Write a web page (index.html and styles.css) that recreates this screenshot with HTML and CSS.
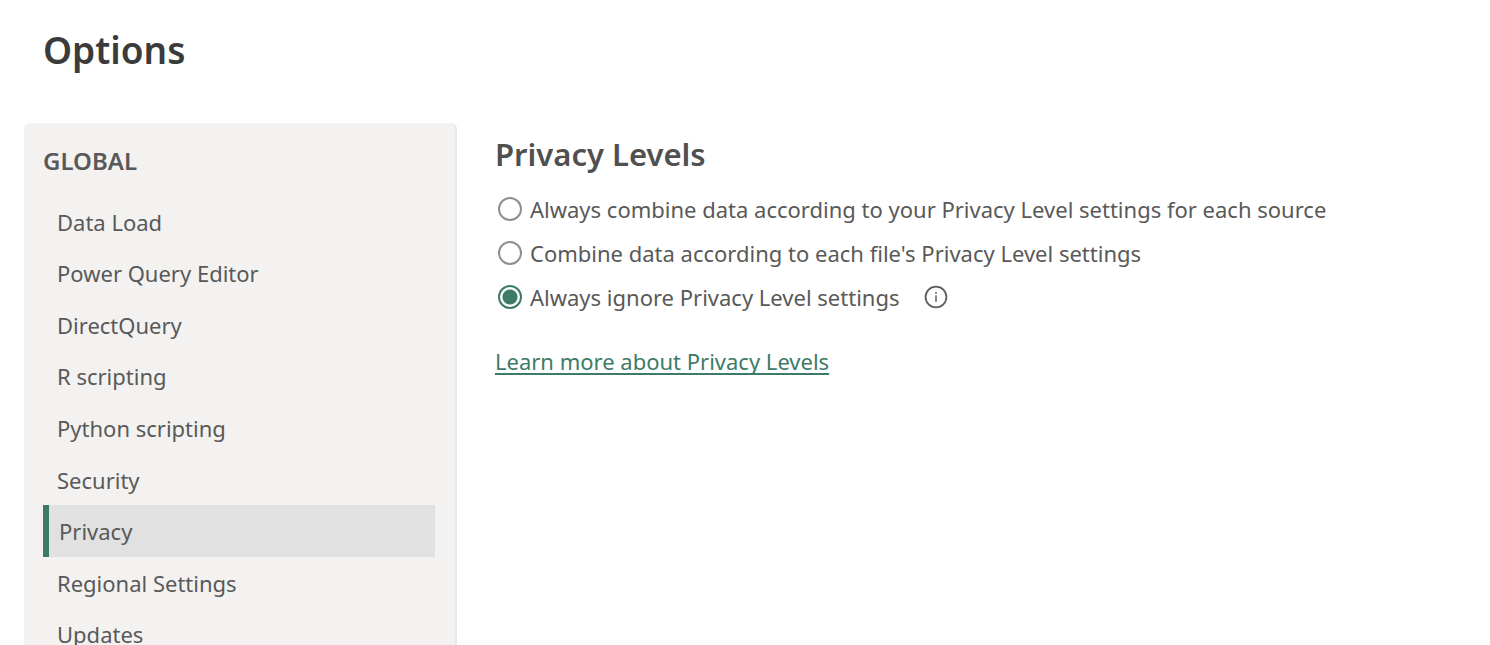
FILE: index.html
```html
<!DOCTYPE html>
<html lang="en">
<head>
  <meta charset="UTF-8" />
  <meta name="viewport" content="width=device-width, initial-scale=1.0" />
  <title>Options</title>
  <link rel="stylesheet" href="styles.css">
</head>
<body>
  <h1 class="title">Options</h1>

  <div class="layout">
    <nav class="sidebar">
      <h2 class="group-title">GLOBAL</h2>
      <ul class="menu">
        <li><a href="#data-load">Data Load</a></li>
        <li><a href="#power-query">Power Query Editor</a></li>
        <li><a href="#direct-query">DirectQuery</a></li>
        <li><a href="#r-scripting">R scripting</a></li>
        <li><a href="#python-scripting">Python scripting</a></li>
        <li><a href="#security">Security</a></li>
        <li><a href="#privacy" class="active" aria-current="page">Privacy</a></li>
        <li><a href="#regional">Regional Settings</a></li>
        <li><a href="#updates">Updates</a></li>
      </ul>
    </nav>

    <main class="content">
      <h2 class="section-title">Privacy Levels</h2>
      <div class="options">
        <div class="option">
          <input type="radio" name="privacy" id="always" />
          <label for="always">Always combine data according to your Privacy Level settings for each source</label>
        </div>
        <div class="option">
          <input type="radio" name="privacy" id="file" />
          <label for="file">Combine data according to each file's Privacy Level settings</label>
        </div>
        <div class="option">
          <input type="radio" name="privacy" id="ignore" checked />
          <label for="ignore">Always ignore Privacy Level settings</label>
          <button class="info" type="button" aria-label="More information">
            <svg viewBox="0 0 24 24" width="24" height="24">
              <circle cx="12" cy="12" r="10.4" fill="none" stroke="#5c5c5c" stroke-width="1.8"/>
              <rect x="11.2" y="7" width="1.6" height="1.8" fill="#666"/>
              <rect x="11.2" y="10.3" width="1.6" height="6.5" fill="#666"/>
            </svg>
          </button>
        </div>
      </div>
      <a class="learn-more" href="#learn-more">Learn more about Privacy Levels</a>
    </main>
  </div>
</body>
</html>
```
FILE: styles.css
```css
* {
  box-sizing: border-box;
}

body {
  margin: 0;
  padding: 24px 24px 0;
  height: 100vh;
  display: flex;
  flex-direction: column;
  overflow: hidden;
  background: #fff;
  color: #595959;
  font-family: "Segoe UI", "Noto Sans", "Open Sans", sans-serif;
  font-size: 22px;
  line-height: 32px;
}

h1, h2, ul {
  margin: 0;
  padding: 0;
}

.title {
  padding-left: 19px;
  font-size: 37px;
  font-weight: 600;
  line-height: 52px;
  color: #3b3b3b;
}

.layout {
  display: flex;
  flex: 1;
  gap: 38px;
  min-height: 0;
  margin-top: 47px;
}

.sidebar {
  width: 433px;
  flex-shrink: 0;
  padding: 22px 20px 0 19px;
  background: #f3f2f1;
  border-right: 2px solid #e8e8e8;
  border-radius: 6px 6px 0 0;
}

.group-title {
  font-size: 24px;
  font-weight: 600;
  line-height: 32px;
}

.menu {
  display: grid;
  grid-auto-rows: 1fr;
  height: 464px;
  margin-top: 19px;
  list-style: none;
}

.menu a {
  display: flex;
  align-items: center;
  height: 100%;
  padding-left: 14px;
  color: inherit;
  text-decoration: none;
}

.menu .active {
  padding-left: 10px;
  background: #e1e1e1;
  border-left: 6px solid #3d7b68;
}

.content {
  flex: 1;
  min-width: 0;
  padding-top: 9px;
}

.section-title {
  font-size: 31px;
  font-weight: 600;
  line-height: 44px;
  color: #505050;
}

.options {
  display: flex;
  flex-direction: column;
  gap: 12px;
  margin: 17px 0 32px;
}

.option {
  display: flex;
  align-items: center;
  padding-left: 3px;
}

.option input {
  appearance: none;
  flex-shrink: 0;
  width: 24px;
  height: 24px;
  margin: 0 8px 0 0;
  border: 2px solid #8f8f8f;
  border-radius: 50%;
  background: #fff;
}

.option input:checked {
  border-color: #3d7b68;
  background: radial-gradient(circle, #3d7b68 7px, #fff 8px);
}

.info {
  display: flex;
  margin-left: 25px;
  padding: 0;
  border: none;
  background: none;
}

.learn-more {
  color: #3d7b68;
  text-underline-offset: 3px;
  text-decoration-thickness: 2px;
  text-decoration-skip-ink: none;
}
```
